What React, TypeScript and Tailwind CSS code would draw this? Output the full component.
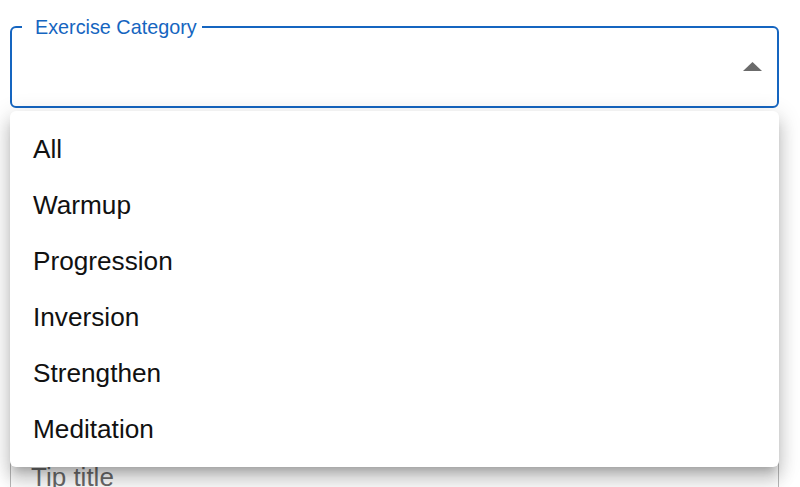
import React from "react";

const categories = ["All", "Warmup", "Progression", "Inversion", "Strengthen", "Meditation"];

const font = { fontFamily: '"Liberation Sans", Arial, sans-serif' };

export default function App() {
  return (
    <div className="relative h-[487px] w-[800px] overflow-hidden bg-white" style={font}>
      <fieldset className="mx-[10px] mt-[16px] w-[769px] rounded-[6px] border-2 border-[#1565c0] px-0 pb-0">
        <legend className="ml-[10px] pl-[13px] pr-[5px] text-[19.8px] leading-[22px] text-[#1565c0]">
          Exercise Category
        </legend>
        <div className="flex h-[68px] items-start justify-end pr-[15px] pt-[24px]">
          <svg width="19" height="9" viewBox="0 0 19 9">
            <polygon points="0,9 9.5,0 19,9" fill="#6b6b6b" />
          </svg>
        </div>
      </fieldset>

      <div className="mx-[10px] mt-[330px] h-[90px] w-[769px] rounded-[6px] border border-[#b8b8b8]">
        <div className="pl-[20px] pt-[23px] text-[26px] leading-[30px] text-[#6b6b6b]">Tip title</div>
      </div>

      <ul className="absolute left-[10px] top-[111px] w-[769px] rounded-[6px] bg-white pb-[9px] pt-[11px] shadow-[0_8px_8px_-5px_rgba(0,0,0,0.2),0_13px_16px_2px_rgba(0,0,0,0.14),0_5px_22px_3px_rgba(0,0,0,0.12)]">
        {categories.map((c) => (
          <li key={c} className="flex h-[56px] items-center px-[23px] text-[26.2px] text-[#111111]">
            {c}
          </li>
        ))}
      </ul>
    </div>
  );
}
